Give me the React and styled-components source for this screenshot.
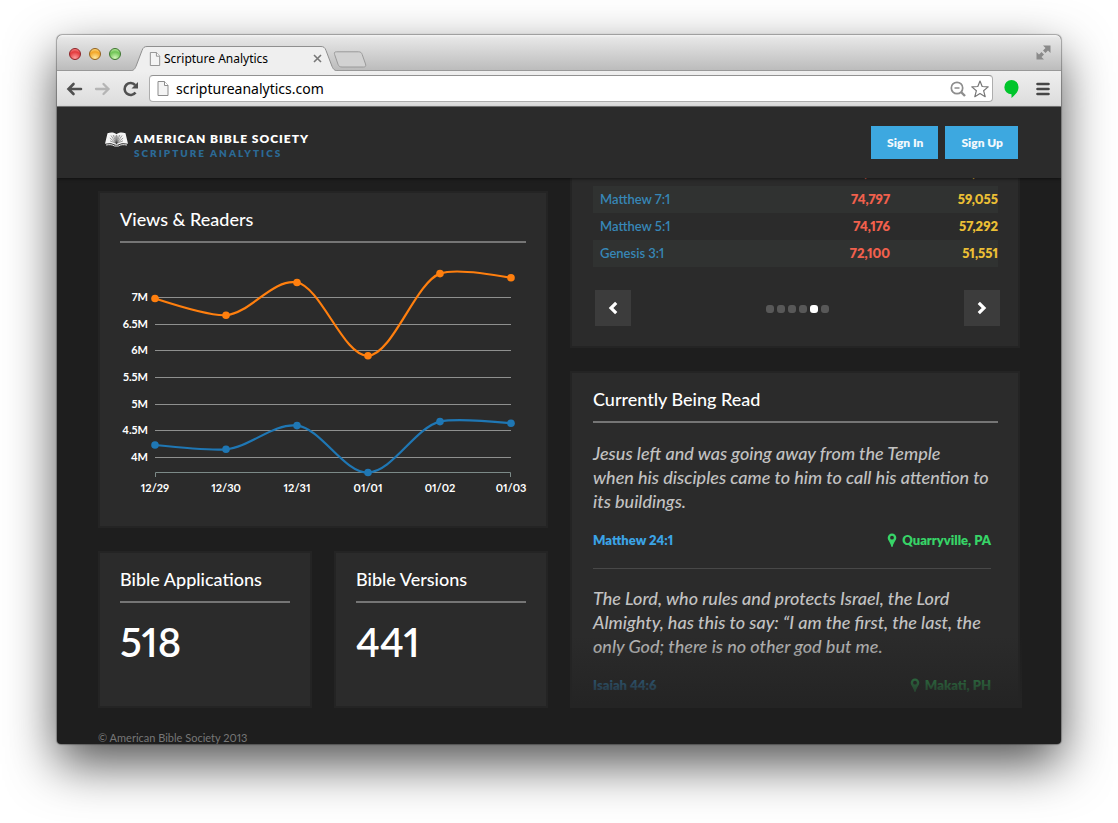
import React from "react";
import styled, { createGlobalStyle, css } from "styled-components";

const GlobalStyle = createGlobalStyle`
  *, *::before, *::after { box-sizing: border-box; }
  body {
    margin: 0;
    background: #fff;
    color: #fff;
    font-family: Lato, "Liberation Sans", sans-serif;
    font-variant-numeric: proportional-nums;
  }
  h1, h2, p, blockquote { margin: 0; font-weight: inherit; }
  button { border: 0; padding: 0; background: none; color: inherit; font: inherit; cursor: pointer; }
  a { color: inherit; text-decoration: none; }
  svg { display: block; }
`;

const Desktop = styled.div`
  padding: 35px 57px 79px;
`;

const Window = styled.div`
  overflow: hidden;
  border-radius: 5px 5px 4px 4px;
  background: #1e1e1e;
  box-shadow: 0 0 1px 1px rgba(0, 0, 0, 0.3), 0 20px 50px rgba(0, 0, 0, 0.68);
`;

const TitleBar = styled.div`
  display: flex;
  align-items: flex-end;
  height: 36px;
  border-bottom: 1px solid #999;
  background: linear-gradient(#f4f4f4, #e6e6e6 3px, #bcbcbc);
`;

const Lights = styled.div`
  display: flex;
  align-self: center;
  gap: 8px;
  padding: 2px 4px 0 12px;
`;

const lights = {
  red: ["#ff9d9d", "#e33a3c", "#8d2125"],
  yellow: ["#ffeaa0", "#f3a626", "#93611b"],
  green: ["#d3f8b9", "#6fc455", "#3d752f"],
};

const Light = styled.button`
  width: 12px;
  height: 12px;
  border: 1px solid ${(p) => lights[p.$tone][2]};
  border-radius: 50%;
  background: radial-gradient(circle at 50% 90%, ${(p) => lights[p.$tone][0]}, ${(p) => lights[p.$tone][1]} 60%, ${(p) => lights[p.$tone][0]});
`;

const Tab = styled.div`
  position: relative;
  display: flex;
  align-items: center;
  width: 208px;
  height: 25px;
  margin: 0 -5px -1px 5px;
  padding: 0 16px 0 19px;
  color: #000;
  font: 12px/24px "Noto Sans", "Open Sans", sans-serif;
`;

const TabShape = styled.svg`
  position: absolute;
  inset: 0;
  width: 100%;
  height: 100%;
`;

const TabTitle = styled.span`
  position: relative;
  flex: 1;
  padding-left: 3px;
`;

const TabPart = styled.span`
  position: relative;
`;

const CloseTab = styled.button`
  position: relative;
  color: #777;
`;

const NewTab = styled.button`
  align-self: flex-end;
  padding-bottom: 2px;
`;

const FullScreen = styled.button`
  align-self: center;
  margin-left: auto;
  margin-right: 10px;
`;

const ToolBar = styled.div`
  display: flex;
  align-items: center;
  height: 36px;
  padding: 0 11px 0 9px;
  border-bottom: 1px solid #7b7b7b;
  background: linear-gradient(#efefef, #dcdcdc);
`;

const NavButtons = styled.div`
  display: flex;
  gap: 10px;
  margin-right: 9px;
`;

const Omnibox = styled.label`
  flex: 1;
  display: flex;
  align-items: center;
  height: 27px;
  padding: 0 3px 0 7px;
  border: 1px solid #adadad;
  border-top-color: #929292;
  border-radius: 4px;
  background: #fff;
`;

const Address = styled.input`
  flex: 1;
  min-width: 0;
  margin-left: 7px;
  padding: 0;
  border: 0;
  outline: 0;
  background: none;
  color: #000;
  font: 14px/20px "Noto Sans", "Open Sans", sans-serif;
`;

const ToolButtons = styled.div`
  display: flex;
  align-items: center;
  gap: 17px;
  margin-left: 11px;
`;

const BoxButtons = styled.div`
  display: flex;
  align-items: center;
  gap: 5px;
`;

const Header = styled.header`
  position: relative;
  z-index: 1;
  display: flex;
  align-items: center;
  justify-content: space-between;
  height: 71px;
  padding: 0 43px 0 48px;
  background: #2b2b2b;
  box-shadow: 0 1px 3px rgba(0, 0, 0, 0.5);
`;

const Brand = styled.a`
  display: flex;
  align-items: flex-start;
  gap: 6px;
  padding-top: 6px;
`;

const BrandName = styled.span`
  display: block;
  font-size: 12px;
  font-weight: 800;
  line-height: 14px;
  letter-spacing: 1px;
`;

const BrandProduct = styled.span`
  display: block;
  color: #2b6a96;
  font-size: 10px;
  font-weight: 800;
  line-height: 14px;
  letter-spacing: 2px;
`;

const Actions = styled.div`
  display: flex;
  gap: 7px;
`;

const Action = styled.button`
  height: 33px;
  padding: 0 15px 0 16px;
  background: #3da8e0;
  color: #f2f8fc;
  font-size: 12px;
  font-weight: 800;
`;

const Content = styled.main`
  padding: 13px 41px 0;
`;

const Columns = styled.div`
  display: grid;
  grid-template-columns: 1fr 1fr;
  gap: 22px;
`;

const Column = styled.div`
  display: flex;
  flex-direction: column;
  gap: 23px;
  min-width: 0;
  ${(p) => p.$scrolled && css`margin-top: -34px;`}
`;

const Card = styled.section`
  position: relative;
  border: 2px solid #242424;
  padding: 13px 20px 20px;
  background: #2b2b2b;
`;

const TableCard = styled(Card)`
  padding-top: 0;
  padding-left: 21px;
`;

const StatCard = styled(Card)`
  min-height: 157px;
`;

const FeedCard = styled(Card)`
  padding-bottom: 9px;
  padding-left: 21px;
`;

const CardTitle = styled.h2`
  padding-bottom: 9px;
  border-bottom: 2px solid #757575;
  font-size: 18px;
  font-weight: 500;
  line-height: 26px;
`;

const Chart = styled.svg`
  width: 100%;
  height: auto;
  overflow: visible;

  text {
    fill: #fff;
    font-size: 11px;
    font-weight: 700;
  }
`;

const StatValue = styled.p`
  margin-top: 15px;
  font-size: 40px;
  font-weight: 600;
  line-height: 48px;
`;

const PassageTable = styled.table`
  width: 100%;
  border-collapse: collapse;
  font-size: 13px;
  line-height: 27px;

  td, th { height: 27px; padding: 0; text-align: right; }
  th { padding-left: 7px; text-align: left; font-weight: 600; color: #3787b7; }
  td { font-weight: 800; }
  tr:nth-child(even) { background: #303231; }
`;

const Views = styled.td`
  color: #f1604d;
`;

const Readers = styled.td`
  width: 108px;
  color: #ebbf35;
`;

const Pager = styled.nav`
  display: flex;
  align-items: center;
  justify-content: space-between;
  margin: 23px -2px 0 2px;
`;

const PageArrow = styled.button`
  display: grid;
  place-items: center;
  width: 36px;
  height: 36px;
  background: #3c3c3c;
`;

const Dots = styled.div`
  display: flex;
  gap: 3px;
  padding-top: 2px;
`;

const Dot = styled.button`
  width: 8px;
  height: 8px;
  border-radius: 3px;
  background: ${(p) => (p.$active ? "#fff" : "#585858")};
`;

const Reading = styled.article`
  margin-right: 7px;
  padding-top: 18px;

  & + & { border-top: 1px solid #484848; padding-top: 17px; }
  &:not(:last-of-type) { padding-bottom: 16px; }
`;

const Quote = styled.blockquote`
  color: #c2c2c2;
  font-size: 18px;
  font-style: italic;
  font-weight: 500;
  line-height: 24px;
  white-space: pre-line;
`;

const ReadingMeta = styled.div`
  display: flex;
  justify-content: space-between;
  margin-top: 15px;
  font-size: 13px;
  font-weight: 800;
  line-height: 24px;
`;

const Reference = styled.a`
  color: #3ba4e6;
`;

const Place = styled.span`
  display: flex;
  align-items: center;
  gap: 5px;
  color: #37d467;
`;

const Fade = styled.div`
  position: absolute;
  right: -4px;
  bottom: -2px;
  left: -2px;
  height: 72px;
  background: linear-gradient(rgba(36, 36, 36, 0), #242424 94%);
  pointer-events: none;
`;

const Footer = styled.footer`
  margin-top: 24px;
  color: #777;
  font-size: 11px;
  line-height: 12px;
`;

const PageIcon = ({ w, h }) => (
  <svg width={w} height={h} viewBox="0 0 12 15" aria-hidden="true">
    <path d="M1 .5h6.5l3.5 4v10H1z" fill="#f4f4f4" stroke="#8c8c8c" />
    <path d="M7.500 .5v4H11" fill="#fff" stroke="#8c8c8c" />
  </svg>
);

const BackIcon = ({ color }) => (
  <svg width="18" height="16" viewBox="0 0 18 16" fill="none" stroke={color} strokeWidth="2.600" strokeLinecap="round">
    <path d="M7.500 3L2.500 8 7.500 13M3 8h12" />
  </svg>
);

const ForwardIcon = ({ color }) => (
  <svg width="18" height="16" viewBox="0 0 18 16" fill="none" stroke={color} strokeWidth="2.300" strokeLinecap="round">
    <path d="M9.500 3L14.500 8 9.500 13M14 8H2" />
  </svg>
);

const ReloadIcon = () => (
  <svg width="18" height="16" viewBox="0 0 18 16">
    <path d="M13.500 11.500A6 6 0 1 1 13.200 4.100" fill="none" stroke="#505050" strokeWidth="2.600" />
    <path d="M16 1v6.500H9.500z" fill="#505050" />
  </svg>
);

const BookLogo = () => (
  <svg width="23" height="15" viewBox="0 0 23 15" aria-hidden="true">
    <path d="M2.500 1.200C6.200 .1 9.500 .5 11.500 2.200 13.500 .5 16.800 .1 20.500 1.200L23 11.800C19 10.800 15 11.200 12.800 12.800H10.200C8 11.200 4 10.800 0 11.800z" fill="#f4f4f4" />
    <path d="M11.500 11.500L6 3.500M11.500 11.500L8.200 3M11.500 11.500L10 3.500M11.500 11.500V3M11.500 11.500L13 3.500M11.500 11.500L14.800 3M11.500 11.500L17 3.500M11.500 11.500L4.800 6M11.500 11.500L18.200 6M11.500 11.500L5 8.800M11.500 11.500L18 8.800" stroke="#3a3a3a" strokeWidth=".5" />
    <path d="M1 13C4.600 12.400 7.500 12.500 9.500 14H13.500C15.500 12.500 18.400 12.400 22 13" fill="none" stroke="#e8e8e8" strokeWidth="1" />
  </svg>
);

const PinIcon = () => (
  <svg width="10" height="14" viewBox="0 0 10 14" fill="currentColor" aria-hidden="true">
    <path fillRule="evenodd" d="M5 .5a4.300 4.300 0 0 1 4.300 4.300C9.300 7.500 6.600 9.500 5.800 13.200a.8.8 0 0 1-1.600 0C3.400 9.500.7 7.500.7 4.800A4.300 4.300 0 0 1 5 .5zM5 2.800a1.900 1.900 0 1 0 0 3.800 1.900 1.900 0 0 0 0-3.800z" />
  </svg>
);

const columnsX = [35, 106, 177, 248, 320, 391];
const dates = ["12/29", "12/30", "12/31", "01/01", "01/02", "01/03"];
const levels = [
  ["7M", 54], ["6.5M", 81], ["6M", 107], ["5.5M", 134], ["5M", 161], ["4.5M", 187], ["4M", 214],
];
const series = [
  { color: "#ff7f0e", ys: [55.5, 72.2, 39.5, 112.8, 30.6, 34.8] },
  { color: "#1f77b4", ys: [202, 206.3, 182.6, 229.5, 178.6, 180.3] },
];

// Cardinal spline with a tight tension; the end segments are quadratic.
function spline(ys) {
  const pts = ys.map((y, i) => [columnsX[i], y]);
  const tan = (i) => [
    0.17 * (pts[i + 1][0] - pts[i - 1][0]),
    0.11 * (pts[i + 1][1] - pts[i - 1][1]),
  ];
  const last = pts.length - 1;
  let d = `M${pts[0]}`;
  for (let i = 1; i <= last; i++) {
    const [a, b] = [pts[i - 1], pts[i]];
    if (i === 1) {
      const t = tan(1);
      d += `Q${b[0] - (t[0] * 2) / 3},${b[1] - (t[1] * 2) / 3} ${b}`;
    } else if (i === last) {
      const t = tan(i - 1);
      d += `Q${a[0] + (t[0] * 2) / 3},${a[1] + (t[1] * 2) / 3} ${b}`;
    } else {
      const t = tan(i - 1);
      const u = tan(i);
      d += `C${a[0] + t[0]},${a[1] + t[1]} ${b[0] - u[0]},${b[1] - u[1]} ${b}`;
    }
  }
  return d;
}

function ViewsChart() {
  return (
    <Chart viewBox="0 0 406 263" role="img" aria-label="Views and readers by day">
      {levels.map(([label, y]) => (
        <g key={label}>
          <path d={`M35 ${y + 0.5}H391`} stroke="#8f908f" />
          <text x="28" y={y + 4} textAnchor="end">{label}</text>
        </g>
      ))}
      <path d="M35.500 234V229.500H390.500V234" fill="none" stroke="#7c8a88" />
      {dates.map((date, i) => (
        <text key={date} x={columnsX[i]} y="249" textAnchor="middle">{date}</text>
      ))}
      {series.map(({ color, ys }) => (
        <g key={color} fill={color}>
          <path d={spline(ys)} fill="none" stroke={color} strokeWidth="2.200" />
          {ys.map((y, i) => <circle key={i} cx={columnsX[i]} cy={y} r="3.800" />)}
        </g>
      ))}
    </Chart>
  );
}

const passages = [
  ["", ",\u2007\u2007\u2007", ",\u2007\u2007\u2007"],
  ["Matthew 7:1", "74,797", "59,055"],
  ["Matthew 5:1", "74,176", "57,292"],
  ["Genesis 3:1", "72,100", "51,551"],
];

const readings = [
  {
    text: "Jesus left and was going away from the Temple\nwhen his disciples came to him to call his attention to\nits buildings.",
    reference: "Matthew 24:1",
    place: "Quarryville, PA",
  },
  {
    text: "The Lord, who rules and protects Israel, the Lord\nAlmighty, has this to say: “I am the first, the last, the\nonly God; there is no other god but me.",
    reference: "Isaiah 44:6",
    place: "Makati, PH",
  },
];

function BrowserChrome() {
  return (
    <>
      <TitleBar>
        <Lights>
          <Light $tone="red" aria-label="Close window" />
          <Light $tone="yellow" aria-label="Minimise window" />
          <Light $tone="green" aria-label="Zoom window" />
        </Lights>
        <Tab>
          <TabShape viewBox="0 0 208 25" preserveAspectRatio="none" aria-hidden="true">
            <path d="M0 25C4 24.500 5 23 6.500 19L12 4.500C13 1.500 14.500 .5 17 .5H191C193.500 .5 195 1.500 196 4.500L201.500 19C203 23 204 24.500 208 25" fill="#efefef" stroke="#8f8f8f" />
          </TabShape>
          <TabPart><PageIcon w={12} h={14} /></TabPart>
          <TabTitle>Scripture Analytics</TabTitle>
          <CloseTab aria-label="Close tab">
            <svg width="9" height="9" viewBox="0 0 9 9" stroke="currentColor" strokeWidth="1.600">
              <path d="M1 1l7 7M8 1l-7 7" />
            </svg>
          </CloseTab>
        </Tab>
        <NewTab aria-label="New tab">
          <svg width="34" height="17" viewBox="0 0 34 17">
            <path d="M3.500 .8H25.500C27.500 .8 28.500 1.500 29.200 3.500L32.500 13C33.200 15 32.500 16 30.500 16H9C7 16 5.800 15.300 5 13.300L1.600 3.500C1 1.700 1.500 .8 3.500 .8z" fill="#d2d2d2" stroke="#9a9a9a" />
          </svg>
        </NewTab>
        <FullScreen aria-label="Full screen">
          <svg width="15" height="15" viewBox="0 0 15 15" fill="#8a8a8a">
            <path d="M7 .5H14.500V8L12 5.500 9.500 8 7 5.500 9.500 3zM8 14.500H.5V7L3 9.500 5.500 7 8 9.500 5.500 12z" />
          </svg>
        </FullScreen>
      </TitleBar>
      <ToolBar>
        <NavButtons>
          <button aria-label="Back"><BackIcon color="#505050" /></button>
          <button aria-label="Forward"><ForwardIcon color="#b5b5b5" /></button>
          <button aria-label="Reload"><ReloadIcon /></button>
        </NavButtons>
        <Omnibox>
          <PageIcon w={12} h={15} />
          <Address aria-label="Address" defaultValue="scriptureanalytics.com" />
          <BoxButtons>
            <button aria-label="Zoom out">
              <svg width="16" height="16" viewBox="0 0 16 16" fill="none" stroke="#8d8d8d">
                <circle cx="7" cy="7" r="5.700" strokeWidth="1.700" />
                <path d="M4.500 7h5" strokeWidth="1.300" />
                <path d="M11 11l4 4" strokeWidth="2.400" />
              </svg>
            </button>
            <button aria-label="Bookmark">
              <svg width="18" height="18" viewBox="0 0 18 18" fill="#fff" stroke="#777" strokeWidth="1.200" strokeLinejoin="round">
                <path d="M9 1L11.200 6.500 17.200 6.900 12.600 10.700 14.200 16.700 9 13.500 3.800 16.700 5.400 10.700 .8 6.900 6.800 6.500z" />
              </svg>
            </button>
          </BoxButtons>
        </Omnibox>
        <ToolButtons>
          <button aria-label="Hangouts">
            <svg width="15" height="18" viewBox="0 0 15 18" fill="#00c52b">
              <path d="M7.500 0A7 7 0 0 1 14.500 7.200C14.500 12 11 14.500 7.500 18V14.300A7 7 0 0 1 7.500 0z" />
            </svg>
          </button>
          <button aria-label="Menu">
            <svg width="14" height="14" viewBox="0 0 14 14" stroke="#464646" strokeWidth="2.600" strokeLinecap="round">
              <path d="M1.500 2h11M1.500 7h11M1.500 12h11" />
            </svg>
          </button>
        </ToolButtons>
      </ToolBar>
    </>
  );
}

export default function App() {
  return (
    <>
      <GlobalStyle />
      <Desktop>
        <Window>
          <BrowserChrome />
          <Header>
            <Brand href="#">
              <BookLogo />
              <span>
                <BrandName>AMERICAN BIBLE SOCIETY</BrandName>
                <BrandProduct>SCRIPTURE ANALYTICS</BrandProduct>
              </span>
            </Brand>
            <Actions>
              <Action>Sign In</Action>
              <Action>Sign Up</Action>
            </Actions>
          </Header>
          <Content>
            <Columns>
              <Column>
                <Card>
                  <CardTitle>Views &amp; Readers</CardTitle>
                  <ViewsChart />
                </Card>
                <Columns>
                  <StatCard>
                    <CardTitle>Bible Applications</CardTitle>
                    <StatValue>518</StatValue>
                  </StatCard>
                  <StatCard>
                    <CardTitle>Bible Versions</CardTitle>
                    <StatValue>441</StatValue>
                  </StatCard>
                </Columns>
              </Column>
              <Column $scrolled>
                <TableCard>
                  <PassageTable>
                    <tbody>
                      {passages.map(([name, views, readers]) => (
                        <tr key={name}>
                          <th scope="row"><a href="#">{name}</a></th>
                          <Views>{views}</Views>
                          <Readers>{readers}</Readers>
                        </tr>
                      ))}
                    </tbody>
                  </PassageTable>
                  <Pager aria-label="Passage pages">
                    <PageArrow aria-label="Previous">
                      <svg width="10" height="14" viewBox="0 0 10 14" fill="none" stroke="#fff" strokeWidth="3.200"><path d="M8.200 1.800L3 7l5.200 5.200" /></svg>
                    </PageArrow>
                    <Dots>
                      {[0, 1, 2, 3, 4, 5].map((n) => (
                        <Dot key={n} $active={n === 4} aria-label={`Page ${n + 1}`} />
                      ))}
                    </Dots>
                    <PageArrow aria-label="Next">
                      <svg width="10" height="14" viewBox="0 0 10 14" fill="none" stroke="#fff" strokeWidth="3.200"><path d="M1.800 1.800L7 7l-5.200 5.200" /></svg>
                    </PageArrow>
                  </Pager>
                </TableCard>
                <FeedCard>
                  <CardTitle>Currently Being Read</CardTitle>
                  {readings.map((r) => (
                    <Reading key={r.reference}>
                      <Quote>{r.text}</Quote>
                      <ReadingMeta>
                        <Reference href="#">{r.reference}</Reference>
                        <Place><PinIcon />{r.place}</Place>
                      </ReadingMeta>
                    </Reading>
                  ))}
                  <Fade />
                </FeedCard>
              </Column>
            </Columns>
            <Footer>© American Bible Society 2013</Footer>
          </Content>
        </Window>
      </Desktop>
    </>
  );
}
